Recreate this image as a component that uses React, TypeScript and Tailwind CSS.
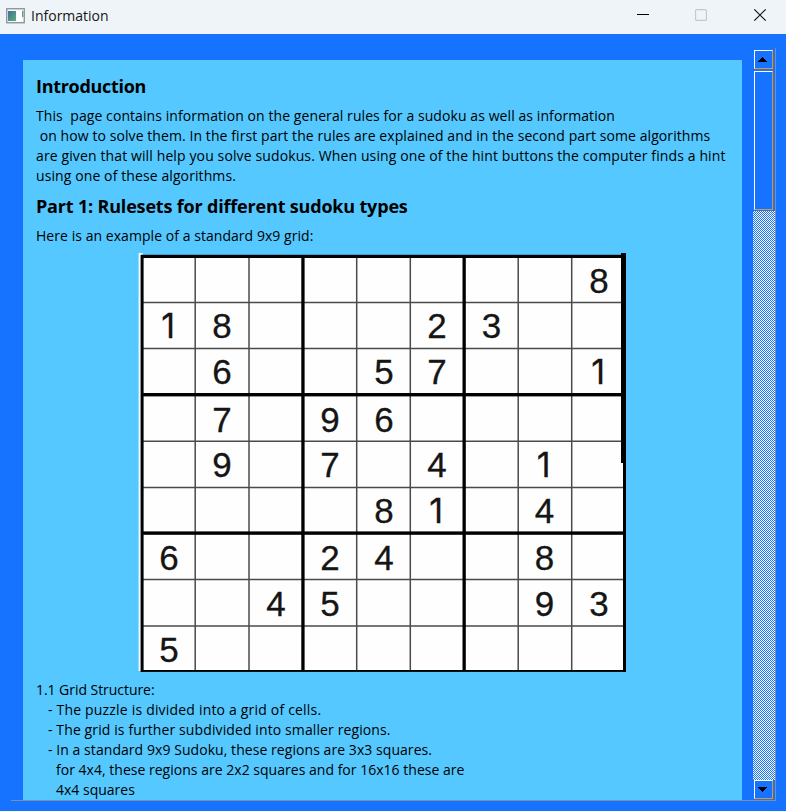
import React from "react";

const rows = [
  "........8",
  "18...23..",
  ".6..57..1",
  ".7.96....",
  ".9.7.4.1.",
  "....81.4.",
  "6..24..8.",
  "..45...93",
  "5........",
];

const colCenters = [31, 84, 138, 192, 246, 299, 353.5, 406.5, 461];
const baselines = [39.8, 85, 131.2, 178.6, 224, 270, 317, 362.5, 408.5];
const thinX = [57.2, 111, 218.7, 272.3, 380.2, 433.7];
const thinY = [49.5, 95.6, 188.2, 234.4, 326.5, 373];

function SudokuGrid() {
  return (
    <svg width="488" height="419" viewBox="0 0 488 419" className="block">
      <rect x="0.6" y="0" width="4" height="418" fill="#eefaff" />
      <rect x="3" y="3" width="482" height="415" fill="#fefefe" />
      <g stroke="#4a4a4a" strokeWidth="1.5">
        {thinX.map((x) => (
          <line key={x} x1={x} y1="3" x2={x} y2="417" />
        ))}
        {thinY.map((y) => (
          <line key={y} x1="4" y1={y} x2="485" y2={y} />
        ))}
      </g>
      <g fill="#000">
        <rect x="3" y="1.8" width="484" height="3.2" />
        <rect x="2.6" y="2" width="3" height="417" />
        <rect x="163.3" y="3" width="3.3" height="415" />
        <rect x="324.5" y="3" width="3.3" height="415" />
        <rect x="3" y="140" width="482" height="3.4" />
        <rect x="3" y="278.4" width="482" height="3.4" />
        <rect x="3" y="417" width="484" height="1.9" />
        <rect x="483" y="0" width="5" height="210" />
        <rect x="485" y="209" width="3" height="210" />
      </g>
      <g textAnchor="middle" fill="#151515" stroke="#151515" strokeWidth="0.3">
        {rows.map((row, r) =>
          row.split("").map((n, c) =>
            n === "." ? null : (
              <text
                key={`${r}-${c}`}
                x={n === "1" ? colCenters[c] - 0.8 : colCenters[c]}
                y={baselines[r]}
                className={n === "1" ? "font-['Inter',sans-serif] text-[34px]" : "font-['Liberation_Sans',Arial,sans-serif] text-[35px]"}
              >
                {n}
              </text>
            )
          )
        )}
      </g>
    </svg>
  );
}

function Line({ children, className = "" }: { children: React.ReactNode; className?: string }) {
  return <div className={`h-5 whitespace-pre leading-5 ${className}`}><span>{children}</span></div>;
}

function ScrollButton({ down = false }: { down?: boolean }) {
  return (
    <div className="mr-[2px] flex h-[19px] shrink-0 items-center justify-center border border-t-white border-l-white border-r-[#a0a0a0] border-b-[#a0a0a0] shadow-[1px_1px_0_#696969]">
      <svg width="9" height="5" viewBox="0 0 9 5" shapeRendering="crispEdges" className="-ml-0.5">
        <path d={down ? "M0 0h9v1H8v1H7v1H6v1H5v1H4V4H3V3H2V2H1V1H0z" : "M0 5h9V4H8V3H7V2H6V1H5V0H4v1H3v1H2v1H1v1H0z"} />
      </svg>
    </div>
  );
}

export default function App() {
  return (
    <div className="flex h-[811px] w-[786px] flex-col overflow-hidden bg-[#1673ff] font-['Open_Sans','Noto_Sans',sans-serif] text-black">
      <header className="flex h-[34px] shrink-0 items-center bg-[#eff4f9] pl-1.5">
        <svg width="19" height="16" viewBox="0 0 19 16" className="-mt-0.5">
          <defs>
            <linearGradient id="app" x1="0" y1="0" x2="1" y2="1">
              <stop offset="0" stopColor="#3c6f9c" />
              <stop offset="1" stopColor="#5fae7a" />
            </linearGradient>
          </defs>
          <rect x="0.75" y="0.75" width="17.5" height="14" fill="#f6f8f9" stroke="#8b9093" strokeWidth="1.3" />
          <rect x="2" y="3" width="8" height="10" fill="url(#app)" />
          <rect x="11" y="3" width="5" height="10" fill="#fff" />
          <rect x="16" y="3" width="1.3" height="6" fill="#5b9d87" />
        </svg>
        <h1 className="-mt-0.5 ml-1.5 text-[14px] leading-5 whitespace-nowrap text-[#161616]">Information</h1>
        <div className="-mt-1 mr-[19px] ml-auto flex items-center">
          <svg width="130" height="16" viewBox="0 0 130 16" fill="none">
            <path d="M0 7.5h12" stroke="#000" />
            <rect x="58.6" y="2.6" width="10.8" height="10.8" rx="1" stroke="#c3c7cb" strokeWidth="1.1" />
            <path d="M117.3 2.3l11.4 11.4M128.7 2.3l-11.4 11.4" stroke="#111" strokeWidth="1.2" />
          </svg>
        </div>
      </header>
      <div className="mt-[14px] mr-[10px] ml-[11px] flex h-[753px] shrink-0 border-b border-[#7d8fa8]">
        <main className="mt-3 ml-3 w-[719px] overflow-hidden bg-[#54c8ff] pl-[13px] text-[14px]">
          <h2 className="mt-[14px] h-6 text-[18px] leading-6 font-bold tracking-[-0.3px] whitespace-nowrap"><span>Introduction</span></h2>
          <div className="mt-2">
            <Line className="tracking-[0.08px]">This  page contains information on the general rules for a sudoku as well as information</Line>
            <Line className="tracking-[0.08px]"> on how to solve them. In the first part the rules are explained and in the second part some algorithms</Line>
            <Line className="tracking-[0.12px]">are given that will help you solve sudokus. When using one of the hint buttons the computer finds a hint</Line>
            <Line className="tracking-[0.1px]">using one of these algorithms.</Line>
          </div>
          <h2 className="mt-2 h-6 text-[18px] leading-6 font-bold tracking-[-0.18px] whitespace-nowrap"><span>Part 1: Rulesets for different sudoku types</span></h2>
          <Line className="mt-2 tracking-[0.05px]">Here is an example of a standard 9x9 grid:</Line>
          <div className="mt-[7px] ml-[102px]"><SudokuGrid /></div>
          <div className="mt-2">
            <Line className="tracking-[-0.05px]">1.1 Grid Structure:</Line>
            <Line className="ml-3 tracking-[0.19px]">- The puzzle is divided into a grid of cells.</Line>
            <Line className="ml-3 tracking-[0.11px]">- The grid is further subdivided into smaller regions.</Line>
            <Line className="ml-3 tracking-[0.06px]">- In a standard 9x9 Sudoku, these regions are 3x3 squares.</Line>
            <Line className="ml-5 tracking-[0.02px]">for 4x4, these regions are 2x2 squares and for 16x16 these are</Line>
            <Line className="ml-5">4x4 squares</Line>
          </div>
        </main>
        <aside className="ml-3 flex w-[22px] flex-col border-r border-[#7d8fa8] pt-[2px]">
          <ScrollButton />
          <div className="mt-[2px] mr-[2px] h-[139px] border border-t-white border-l-white border-r-[#a0a0a0] border-b-[#a0a0a0] shadow-[1px_1px_0_#696969]" />
          <div className="mt-px -ml-px flex-1 bg-[conic-gradient(#fff_25%,#1673ff_0_50%,#fff_0_75%,#1673ff_0)] bg-[length:2px_2px]" />
          <ScrollButton down />
          <div className="h-px" />
        </aside>
      </div>
    </div>
  );
}
